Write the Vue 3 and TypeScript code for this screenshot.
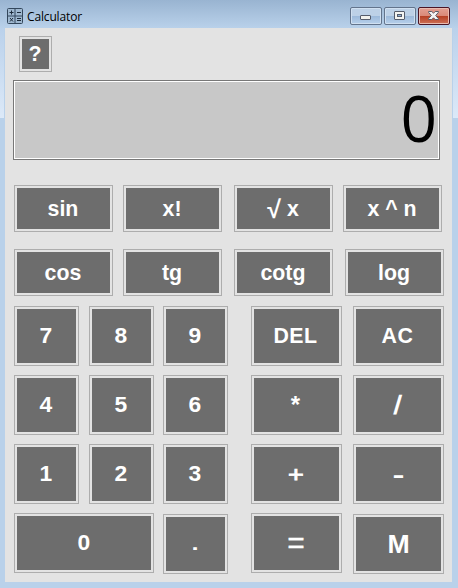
<script setup lang="ts">
import { ref } from 'vue'

interface Key {
  label: string
  kind?: string
}

const display = ref('0')

const functionRows: Key[][] = [
  [{ label: 'sin' }, { label: 'x!' }, { label: '√ x', kind: 'root' }, { label: 'x ^ n', kind: 'power' }],
  [{ label: 'cos' }, { label: 'tg' }, { label: 'cotg' }, { label: 'log' }],
]

const digits: Key[] = [
  ...['7', '8', '9', '4', '5', '6', '1', '2', '3'].map((label) => ({ label })),
  { label: '0', kind: 'zero' },
  { label: '.', kind: 'lowered point' },
]

const operators: Key[] = [
  { label: 'DEL', kind: 'caps' },
  { label: 'AC', kind: 'caps' },
  { label: '*', kind: 'star' },
  { label: '/', kind: 'large slash' },
  { label: '+', kind: 'plus' },
  { label: '-', kind: 'large minus' },
  { label: '=', kind: 'equals' },
  { label: 'M', kind: 'large lowered memory' },
]
</script>

<template>
  <div class="window">
    <header class="titlebar">
      <svg class="app-icon" width="16" height="16" viewBox="0 0 16 16">
        <rect x="0.5" y="0.5" width="15" height="15" rx="1" fill="#9fb8d0" stroke="#33475c" />
        <path d="M8 1V15M1 8H15" stroke="#33475c" />
        <path d="M2.5 4.5h4M4.5 2.5v4M10 4.5h4M3 10l3 3.5M6 10l-3 3.5M10 10.5h4M10 12.5h4" fill="none" stroke="#1d2b3a" />
      </svg>
      <h1 class="title">Calculator</h1>
      <div class="controls">
        <button class="control" aria-label="Minimize">
          <svg width="12" height="9" viewBox="0 0 12 9">
            <rect x="0.5" y="4.5" width="10" height="4" rx="0.5" fill="#f1f1ed" stroke="#555c6b" />
          </svg>
        </button>
        <button class="control" aria-label="Maximize">
          <svg width="12" height="9" viewBox="0 0 12 9">
            <rect x="0.5" y="0.5" width="10" height="8" rx="0.5" fill="#f4f4f1" stroke="#555c6b" />
            <rect x="3.5" y="3.5" width="4" height="2" fill="#91b3da" stroke="#555c6b" />
          </svg>
        </button>
        <button class="control close" aria-label="Close">
          <svg width="12" height="9" viewBox="0 0 12 9">
            <path
              d="M.6.5H3.8L5.5 2.2 7.2.5H10.4V1.4L7.7 4.5 10.4 7.6V8.5H7.2L5.5 6.8 3.8 8.5H.6V7.6L3.3 4.5.6 1.4Z"
              fill="#f4f4f4"
              stroke="#595d69"
            />
          </svg>
        </button>
      </div>
    </header>

    <main class="client">
      <button class="key help">?</button>
      <output class="display">{{ display }}</output>
      <div v-for="(row, i) in functionRows" :key="i" class="functions" :class="{ wide: i === 1 }">
        <button v-for="key in row" :key="key.label" class="key" :class="key.kind">
          <template v-if="key.kind === 'root'"><span class="radical">√</span> x</template>
          <template v-else>{{ key.label }}</template>
        </button>
      </div>
      <div class="pads">
        <div class="digits">
          <button v-for="key in digits" :key="key.label" class="key" :class="key.kind"><span>{{ key.label }}</span></button>
        </div>
        <div class="operators">
          <button v-for="key in operators" :key="key.label" class="key" :class="key.kind"><span>{{ key.label }}</span></button>
        </div>
      </div>
    </main>
  </div>
</template>

<style>
body {
  margin: 0;
  overflow: hidden;
}
</style>

<style scoped>
* {
  box-sizing: border-box;
}

.window {
  width: 458px;
  height: 588px;
  padding: 0 6px 6px 5px;
  background:
    linear-gradient(#bad1eb, #dce9f8) 0 28px / 4px 90px no-repeat,
    linear-gradient(#bad1eb, #dce9f8) 100% 28px / 5px 90px no-repeat,
    linear-gradient(#99b4d1, #b9d1ea) 0 0 / 100% 28px no-repeat,
    #b9d1ea;
}

.titlebar {
  display: flex;
  height: 28px;
  padding: 7px 2px 0;
  align-items: flex-start;
}

.app-icon {
  margin-top: 1px;
}

.title {
  margin: 1px 0 0 4px;
  flex: 1;
  font: 12px/17px "Open Sans", "Noto Sans", sans-serif;
  letter-spacing: -0.15px;
  color: #000;
}

.controls {
  display: flex;
  gap: 2px;
}

.control {
  display: flex;
  width: 32px;
  height: 18px;
  padding: 0 0 1px;
  align-items: center;
  justify-content: center;
  border: 1px solid #63748c;
  border-radius: 2px;
  background: linear-gradient(#bdd1e7 50%, #9cb9da 50%, #b7d0eb);
  box-shadow: inset 0 0 0 1px #d0e0f1;
}

.control.close {
  border-color: #4b1525;
  background: linear-gradient(#e3a093, #d98877 50%, #b53e23 50%, #cd7157);
  box-shadow: inset 0 0 0 1px #e9bbb0;
}

.client {
  display: flex;
  height: 554px;
  padding: 8px 8px 0 9px;
  flex-direction: column;
  align-items: flex-start;
  background: #e3e3e3;
}

.key {
  display: flex;
  padding: 0 1px 0 0;
  align-items: center;
  justify-content: center;
  border: 1px solid #adadad;
  background: #6d6d6d;
  box-shadow: inset 0 0 0 2px #e3e3e3;
  color: #fff;
  font: bold 21.33px/24px "Liberation Sans", Arial, sans-serif;
  white-space: pre;
}

.help {
  width: 33px;
  height: 36px;
  margin-left: 5px;
}

.display {
  width: 427px;
  height: 80px;
  margin: 8px 0 25px -1px;
  padding-right: 2px;
  border: 1px solid #787878;
  background: #c8c8c8;
  box-shadow: inset 0 0 0 1px #fff;
  font: 64px/74px "Open Sans", "Noto Sans", sans-serif;
  text-align: right;
  color: #000;
}

.functions {
  display: grid;
  height: 47px;
  margin-bottom: 17px;
  grid-template-columns: 109px 111px 109px 99px;
}

.functions.wide {
  margin-bottom: 10px;
  grid-template-columns: 109px 111px 111px 99px;
}

.functions .key {
  width: 99px;
}

.radical {
  font-size: 25px;
}

.pads {
  display: flex;
  gap: 23px;
}

.digits,
.operators {
  display: grid;
  grid-auto-rows: 60px;
  row-gap: 9px;
}

.digits {
  grid-template-columns: 75px 74px 65px;
}

.digits .key {
  width: 65px;
}

.digits .key span {
  transform: scaleX(1.07);
}

.digits .zero {
  width: 140px;
  grid-column: span 2;
}

.operators {
  grid-template-columns: 91px 91px;
  column-gap: 11px;
}

.pads .lowered {
  margin-top: 1px;
  height: 60px;
}

.digits .point span {
  transform: scale(1.2, 0.85);
}

.caps {
  padding-right: 2px;
  letter-spacing: 0.5px;
}

.star {
  padding-right: 2px;
  font-size: 24px;
}

.large {
  font-size: 26.67px;
}

.memory {
  padding-right: 0;
}

.slash span {
  transform: skewX(-6deg);
}

.minus span {
  transform: scale(1.35, 0.85);
}

.plus,
.equals {
  font-size: 30px;
  font-weight: normal;
}

.plus {
  font-size: 27px;
  -webkit-text-stroke: 1px #fff;
}

.plus span {
  transform: scaleY(0.85);
}

.equals {
  -webkit-text-stroke: 0.3px #fff;
}
</style>
